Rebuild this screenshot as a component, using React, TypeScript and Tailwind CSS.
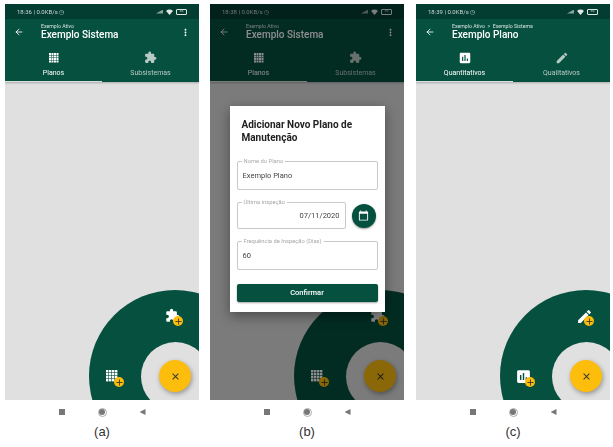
import type { ReactNode } from "react";
import { ArrowLeft } from "lucide-react";
import { MdAssessment, MdCalendarToday, MdClose, MdCreate, MdExtension, MdMoreVert } from "react-icons/md";

const FONT = { fontFamily: "Roboto, sans-serif" };

function GridIcon({ size = 12, className = "" }: { size?: number; className?: string }) {
  const cells = [0, 1, 2, 3];
  return (
    <svg width={size} height={size} viewBox="0 0 16 16" className={className} fill="currentColor">
      {cells.map((y) => cells.map((x) => <rect key={`${x}-${y}`} x={x * 4} y={y * 4} width="3.2" height="3.2" />))}
    </svg>
  );
}

function PlusBadge() {
  return (
    <span className="absolute -right-[5px] -bottom-[4px] flex h-[10px] w-[10px] items-center justify-center rounded-full bg-[#fbbc0c] text-[#3a3a20]">
      <svg width="7" height="7" viewBox="0 0 8 8" stroke="currentColor" strokeWidth="1">
        <path d="M4 0.5v7M0.5 4h7" />
      </svg>
    </span>
  );
}

function SpeedDial({ top, bottom }: { top: ReactNode; bottom: ReactNode }) {
  return (
    <>
      {/* arc menu, centred on the fab */}
      <div className="absolute left-[84px] top-[286px] h-[172px] w-[172px] rounded-full bg-[#05503f]" />
      <div className="absolute left-[136px] top-[338px] h-[69px] w-[69px] rounded-full bg-[#e0e0e0]" />
      <div className="absolute left-[160px] top-[304px] h-[14px] w-[13px] text-white">
        {top}
        <PlusBadge />
      </div>
      <div className="absolute left-[101px] top-[366px] h-[13px] w-[13px] text-white">
        {bottom}
        <PlusBadge />
      </div>
      <div className="absolute left-[154px] top-[356px] flex h-[32px] w-[32px] items-center justify-center rounded-full bg-[#fdbd0d] text-[#33332a] shadow-[1px_2px_5px_rgba(0,0,0,0.35)]">
        <MdClose size={11} />
      </div>
    </>
  );
}

function Phone({
  time,
  crumb,
  title,
  tabs,
  menu,
  children,
  label,
  className = "",
}: {
  time: string;
  crumb: string;
  title: string;
  tabs: { icon: ReactNode; label: string }[];
  menu?: boolean;
  children: ReactNode;
  label: string;
  className?: string;
}) {
  return (
    <div className={`w-[194px] shrink-0 ${className}`}>
      <div className="relative h-[396px] overflow-hidden bg-[#e0e0e0] blur-[0.5px]">
        <div className="flex h-[15px] items-center justify-between bg-[#033d31] pl-[12px] pr-[12px] text-[6px] text-[#cfd8d4]">
          <span>{time} | 0.0KB/s ◷</span>
          <span className="flex items-center gap-[3px]">
            <span className="h-[4px] w-[7px] bg-[#8aa39b] [clip-path:polygon(100%_0,100%_100%,0_100%)]" />
            <svg width="7" height="6" viewBox="0 0 8 7" fill="#dfe8e4"><path d="M0 2.2a5.8 5.8 0 0 1 8 0L4 7z" /></svg>
            <span className="flex h-[6px] w-[11px] items-center justify-center rounded-[1px] border border-[#dfe8e4] text-[3.5px]">36</span>
          </span>
        </div>
        <div className="h-[63px] bg-[#05503f] text-white shadow-[0_1px_2px_rgba(0,0,0,0.25)]">
          <div className="flex h-[29px] items-center pb-[3px] pl-[9px] pr-[8px]">
            <ArrowLeft size={10} strokeWidth={2} />
            <div className="ml-[17px] flex-1">
              <div className="whitespace-pre text-[5.2px] leading-[6px] text-[#d5e0dc]">{crumb}</div>
              <div className="text-[10px] font-medium leading-[12px]">{title}</div>
            </div>
            {menu && <MdMoreVert size={11} />}
          </div>
          <div className="flex h-[34px]">
            {tabs.map((t, i) => (
              <div
                key={t.label}
                className={`flex flex-1 flex-col items-center border-b pt-[3px] ${i === 0 ? "border-[#d8dedb] text-white" : "border-transparent text-[#b8cac4]"}`}
              >
                <span className="flex h-[13px] items-center">{t.icon}</span>
                <span className="mt-[5px] text-[7px] leading-[8px]">{t.label}</span>
              </div>
            ))}
          </div>
        </div>
        {children}
      </div>
      <div className="flex h-[24px] items-center justify-center gap-[33px] blur-[0.4px]">
        <span className="h-[6px] w-[6px] bg-[#777]" />
        <span className="flex h-[9px] w-[9px] items-center justify-center rounded-full border border-[#aaa]">
          <span className="h-[6px] w-[6px] rounded-full bg-[#777]" />
        </span>
        <span className="h-[6px] w-[6px] bg-[#777] [clip-path:polygon(100%_0,100%_100%,0_50%)]" />
      </div>
      <div className="mt-[1px] text-center text-[13px] leading-[14px] text-[#333]" style={{ fontFamily: "Liberation Sans, sans-serif" }}>
        {label}
      </div>
    </div>
  );
}

function Field({ label, value, right, className = "" }: { label: string; value: string; right?: boolean; className?: string }) {
  return (
    <div className={`relative rounded-[2px] border border-[#c9c9c9] bg-white px-[5px] text-[7.5px] text-[#444] ${className}`}>
      <span className="absolute -top-[4px] left-[4px] bg-white px-[2px] text-[5.8px] leading-[6px] text-[#a8a8a8]">{label}</span>
      <div className={`flex h-full items-center ${right ? "justify-end" : ""}`}>{value}</div>
    </div>
  );
}

const sistemaTabs = [
  { icon: <GridIcon size={10} />, label: "Planos" },
  { icon: <MdExtension size={13} />, label: "Subsistemas" },
];

export default function App() {
  return (
    <div className="flex h-[447px] w-[613px] overflow-hidden bg-white pl-[5px] pt-[4px]" style={FONT}>
      <Phone time="18:36" crumb="Exemplo Ativo" title="Exemplo Sistema" tabs={sistemaTabs} menu label="(a)">
        <SpeedDial top={<MdExtension size={15} />} bottom={<GridIcon size={12} />} />
      </Phone>

      <Phone time="18:38" crumb="Exemplo Ativo" title="Exemplo Sistema" tabs={sistemaTabs} menu label="(b)" className="ml-[11px]">
        <SpeedDial top={<MdExtension size={15} />} bottom={<GridIcon size={12} />} />
        {/* dim layer and dialog */}
        <div className="absolute inset-0 flex justify-center bg-black/45 pt-[102px]">
          <div className="h-[206px] w-[155px] bg-white px-[7px] pt-[12px] shadow-[0_4px_12px_rgba(0,0,0,0.4)]">
            <div className="px-[5px] text-[10px] font-bold leading-[13px] text-[#222]">
              Adicionar Novo Plano de Manutenção
            </div>
            <Field label="Nome do Plano" value="Exemplo Plano" className="mt-[17px] h-[29px]" />
            <div className="mt-[12px] flex items-center">
              <Field label="Última inspeção" value="07/11/2020" right className="h-[27px] w-[109px]" />
              <span className="ml-[6px] flex h-[24px] w-[24px] items-center justify-center rounded-full bg-[#05503f] text-white shadow-[0_1px_2px_rgba(0,0,0,0.4)]">
                <MdCalendarToday size={11} />
              </span>
            </div>
            <Field label="Frequência de Inspeção (Dias)" value="60" className="mt-[12px] h-[29px]" />
            <div className="mt-[14px] flex h-[18px] items-center justify-center rounded-[2px] bg-[#05503f] text-[7.5px] font-medium text-white shadow-[0_1px_2px_rgba(0,0,0,0.35)]">
              Confirmar
            </div>
          </div>
        </div>
      </Phone>

      <Phone
        time="18:39"
        crumb="Exemplo Ativo  >  Exemplo Sistema"
        title="Exemplo Plano"
        tabs={[
          { icon: <MdAssessment size={14} />, label: "Quantitativos" },
          { icon: <MdCreate size={14} />, label: "Qualitativos" },
        ]}
        label="(c)"
        className="ml-[12px]"
      >
        <SpeedDial top={<MdCreate size={17} />} bottom={<MdAssessment size={17} className="-ml-[2px] -mt-[2px]" />} />
      </Phone>
    </div>
  );
}
